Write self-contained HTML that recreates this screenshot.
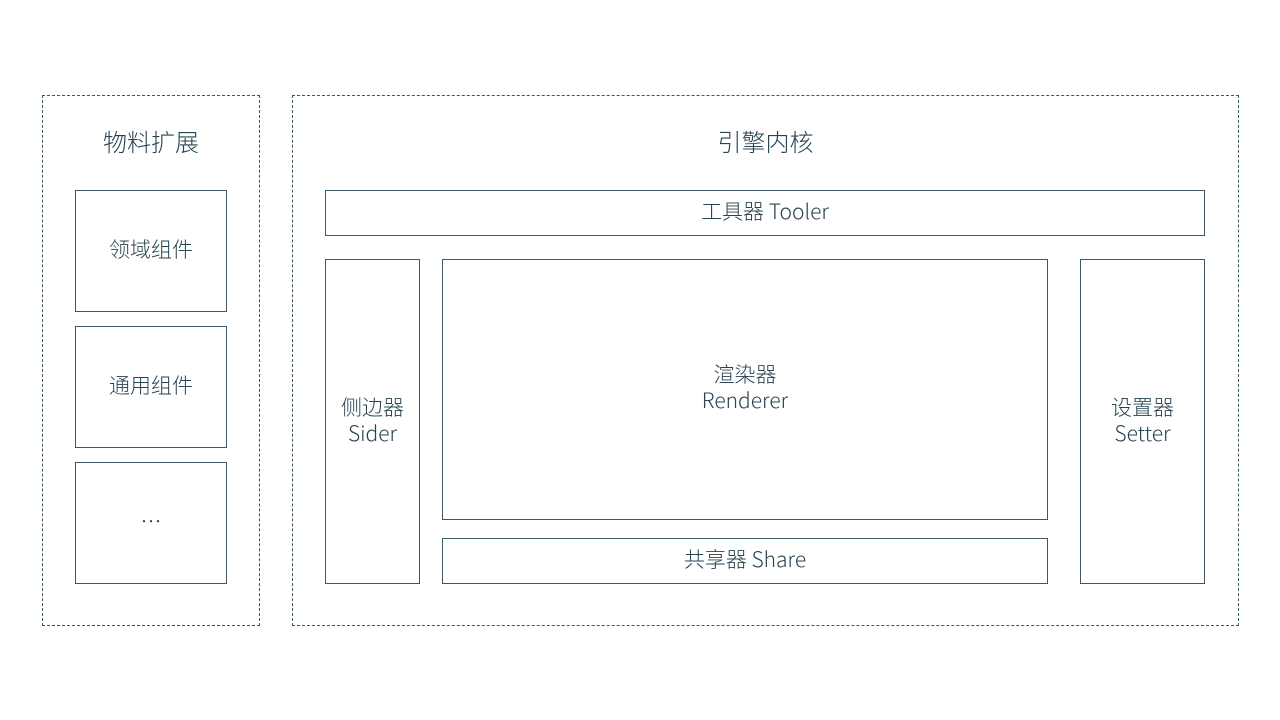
<!DOCTYPE html>
<html><head><meta charset="utf-8"><style>
body{margin:0;width:1280px;height:720px;background:#fff;position:relative;font-family:"Noto Sans CJK SC","Liberation Sans",sans-serif;color:#284450;font-weight:300;overflow:hidden}
.b{position:absolute;box-sizing:border-box;border:1px solid #3a5866;display:flex;align-items:center;justify-content:center;text-align:center;font-size:21px;line-height:26px;padding-bottom:4px}
.d{position:absolute;box-sizing:border-box;border:1px dashed #3a5866}
.t{position:absolute;font-size:24px;text-align:center;line-height:30px}
</style></head><body>
<div class="d" style="left:42px;top:95px;width:218px;height:531px"></div>
<div class="d" style="left:292px;top:95px;width:947px;height:531px"></div>
<div class="t" style="left:42px;width:218px;top:126px">物料扩展</div>
<div class="t" style="left:292px;width:947px;top:126px">引擎内核</div>
<div class="b" style="left:75px;top:190px;width:152px;height:122px">领域组件</div>
<div class="b" style="left:75px;top:326px;width:152px;height:122px">通用组件</div>
<div class="b" style="left:75px;top:462px;width:152px;height:122px">…</div>
<div class="b" style="left:325px;top:190px;width:880px;height:46px">工具器 Tooler</div>
<div class="b" style="left:325px;top:259px;width:95px;height:325px">侧边器<br>Sider</div>
<div class="b" style="left:442px;top:259px;width:606px;height:261px;padding-bottom:6px">渲染器<br>Renderer</div>
<div class="b" style="left:442px;top:538px;width:606px;height:46px">共享器 Share</div>
<div class="b" style="left:1080px;top:259px;width:125px;height:325px">设置器<br>Setter</div>
</body></html>
